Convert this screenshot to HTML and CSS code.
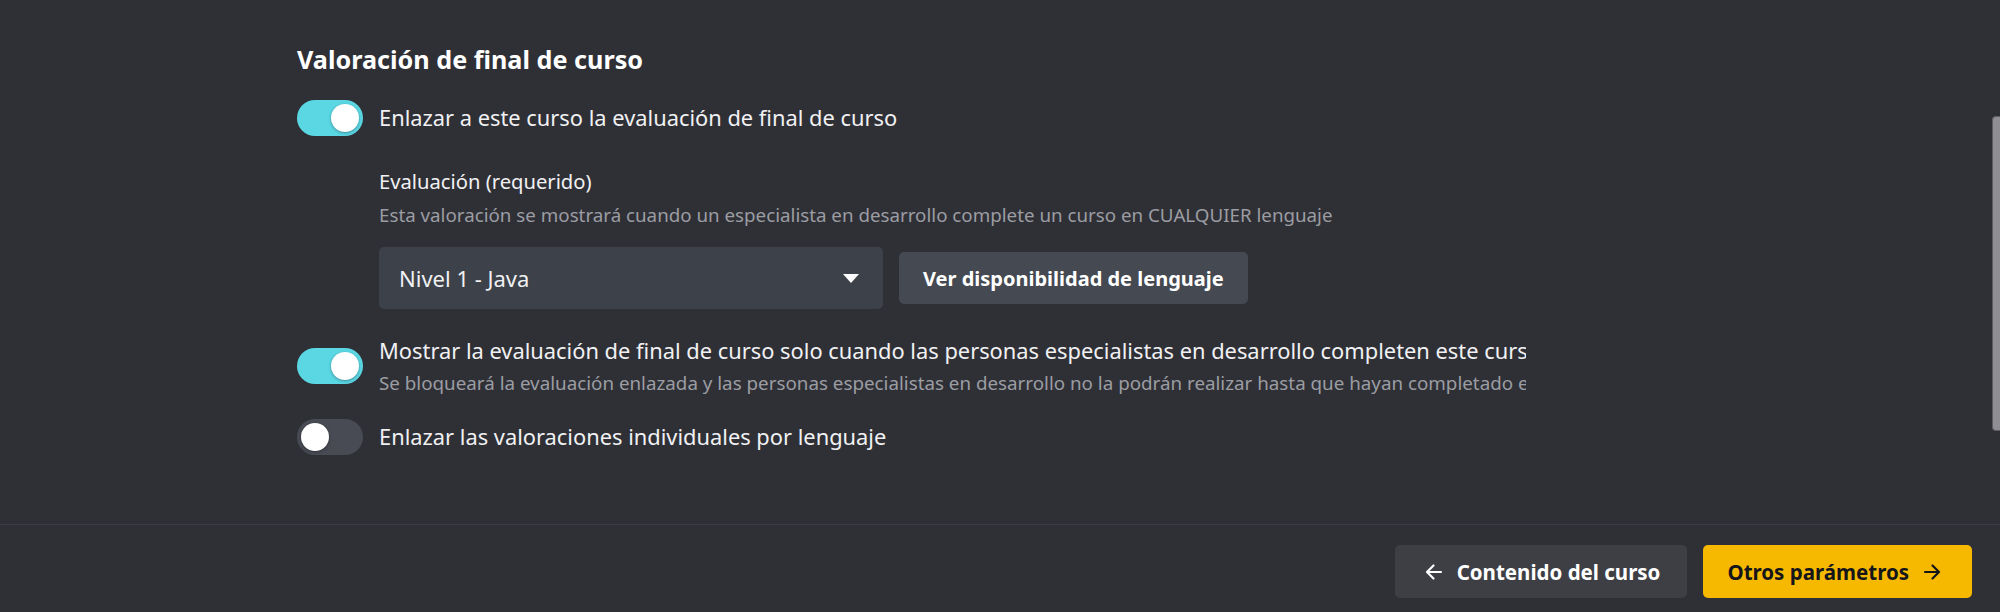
FILE: index.html
```html
<!DOCTYPE html>
<html lang="es">
  <head>
    <meta charset="UTF-8" />
    <meta name="viewport" content="width=device-width, initial-scale=1.0" />
    <title>Valoración de final de curso</title>
    <link rel="stylesheet" href="styles.css">
  </head>
  <body>
    <div class="course-settings">
      <main class="course-settings__body">
        <section class="assessment">
          <h2 class="assessment__title">Valoración de final de curso</h2>

          <label class="switch-row assessment__row--link">
            <span class="switch switch--on"><span class="switch__knob"></span></span>
            <span class="switch-row__label">Enlazar a este curso la evaluación de final de curso</span>
          </label>

          <div class="assessment__linked">
            <p class="assessment__field-name">Evaluación (requerido)</p>
            <p class="assessment__field-hint">
              Esta valoración se mostrará cuando un especialista en desarrollo complete un curso en CUALQUIER lenguaje
            </p>
            <div class="assessment__picker">
              <div class="select">
                <span class="select__value">Nivel 1 - Java</span>
                <svg class="select__caret" width="16" height="9" viewBox="0 0 16 9">
                  <path d="M0 0h16L8 9z" fill="#fff" />
                </svg>
              </div>
              <button class="btn btn--muted">Ver disponibilidad de lenguaje</button>
            </div>
          </div>

          <label class="switch-row assessment__row--lock">
            <span class="switch switch--on"><span class="switch__knob"></span></span>
            <span class="switch-row__text">
              <span class="switch-row__label">Mostrar la evaluación de final de curso solo cuando las personas especialistas en desarrollo completen este curso</span>
              <span class="switch-row__hint">Se bloqueará la evaluación enlazada y las personas especialistas en desarrollo no la podrán realizar hasta que hayan completado este curso</span>
            </span>
          </label>

          <label class="switch-row assessment__row--per-language">
            <span class="switch"><span class="switch__knob"></span></span>
            <span class="switch-row__label">Enlazar las valoraciones individuales por lenguaje</span>
          </label>
        </section>

        <!-- overlay scrollbar of the settings panel -->
        <div class="scroll-thumb"></div>
      </main>

      <footer class="course-settings__footer">
        <button class="btn btn--nav btn--secondary">
          <svg width="20" height="20" viewBox="0 0 20 20" fill="none" stroke="currentColor" stroke-width="2.2" stroke-linecap="round" stroke-linejoin="round">
            <path d="M17 10H3M9.5 3.5L3 10l6.5 6.5" />
          </svg>
          Contenido del curso
        </button>
        <button class="btn btn--nav btn--primary">
          Otros parámetros
          <svg width="20" height="20" viewBox="0 0 20 20" fill="none" stroke="currentColor" stroke-width="2.2" stroke-linecap="round" stroke-linejoin="round">
            <path d="M3 10h14M10.5 3.5L17 10l-6.5 6.5" />
          </svg>
        </button>
      </footer>
    </div>
  </body>
</html>
```

FILE: styles.css
```css
/* General Styles */
html,
body {
  height: 100%;
}

body {
  margin: 0;
  background-color: #2f3036;
  color: #f1f1f3;
  font-family: "Noto Sans", "Open Sans", Arial, sans-serif;
  overflow: hidden;
}

h2,
p {
  margin: 0;
  padding: 0;
}

.course-settings {
  display: flex;
  flex-flow: column;
  height: 100%;
}

.course-settings__body {
  position: relative;
  height: 525px;
  flex: none;
  padding: 43px 0 0 297px;
  box-sizing: border-box;
  border-bottom: 1px solid #3b3c43;
  overflow: hidden;
}

/* Section */
.assessment {
  width: 1229px;
  display: flex;
  flex-flow: column;
}

.assessment__title {
  font-size: 25.2px;
  line-height: 32px;
  font-weight: 700;
  color: #fff;
}

.assessment__row--link {
  margin-top: 25px;
}

.assessment__linked {
  padding-left: 82px;
  display: flex;
  flex-flow: column;
}

.assessment__field-name {
  margin-top: 32px;
  font-size: 20.2px;
  line-height: 26px;
  color: #f1f1f3;
}

.assessment__field-hint {
  margin-top: 9px;
  font-size: 18.75px;
  line-height: 24px;
  color: #9b9da3;
}

.assessment__picker {
  margin-top: 20px;
  display: flex;
  align-items: center;
  gap: 16px;
}

.assessment__row--lock {
  margin-top: 27px;
}

.assessment__row--per-language {
  margin-top: 23px;
}

/* Switch rows */
.switch-row {
  display: flex;
  align-items: center;
  gap: 16px;
}

.switch-row__text {
  flex: 1;
  min-width: 0;
  display: flex;
  flex-flow: column;
  gap: 4px;
  overflow: hidden;
  white-space: nowrap;
}

.switch-row__label {
  font-size: 21.85px;
  line-height: 30px;
  color: #f1f1f3;
}

.switch-row__hint {
  font-size: 18.8px;
  line-height: 26px;
  color: #9b9da3;
}

.switch {
  position: relative;
  flex: none;
  width: 66px;
  height: 36px;
  border-radius: 18px;
  background-color: #484b53;
}

.switch--on {
  background-color: #5bd7e4;
}

.switch__knob {
  position: absolute;
  top: 4px;
  left: 4px;
  width: 28px;
  height: 28px;
  border-radius: 50%;
  background-color: #fff;
  box-shadow: 0 1px 3px rgba(0, 0, 0, 0.35);
}

.switch--on .switch__knob {
  left: 34px;
}

/* Select */
.select {
  width: 504px;
  height: 62px;
  box-sizing: border-box;
  padding: 0 24px 0 20px;
  display: flex;
  align-items: center;
  justify-content: space-between;
  border-radius: 5px;
  background-color: #3d4149;
}

.select__value {
  font-size: 22px;
  color: #f1f1f3;
}

/* Button Styles */
.btn {
  border: none;
  border-radius: 5px;
  font-family: inherit;
  font-size: 20px;
  font-weight: 700;
  cursor: pointer;
}

.btn--muted {
  height: 52px;
  padding: 0 24px;
  background-color: #454951;
  color: #fff;
}

.course-settings__footer {
  display: flex;
  justify-content: flex-end;
  gap: 16px;
  padding: 20px 28px;
}

.btn--nav {
  height: 53px;
  display: flex;
  align-items: center;
  gap: 13px;
  font-size: 20.5px;
}

.btn--secondary {
  padding: 0 27px 0 29px;
  background-color: #3e3f45;
  color: #fff;
}

.btn--primary {
  padding: 0 30px 0 24px;
  background-color: #f6b900;
  color: #15151a;
}

/* Scrollbar */
.scroll-thumb {
  position: absolute;
  top: 116px;
  right: 0;
  width: 7px;
  height: 313px;
  border: 1px solid #5d5d62;
  border-right: none;
  border-radius: 4px 0 0 4px;
  background-color: #8e8e93;
}
```
